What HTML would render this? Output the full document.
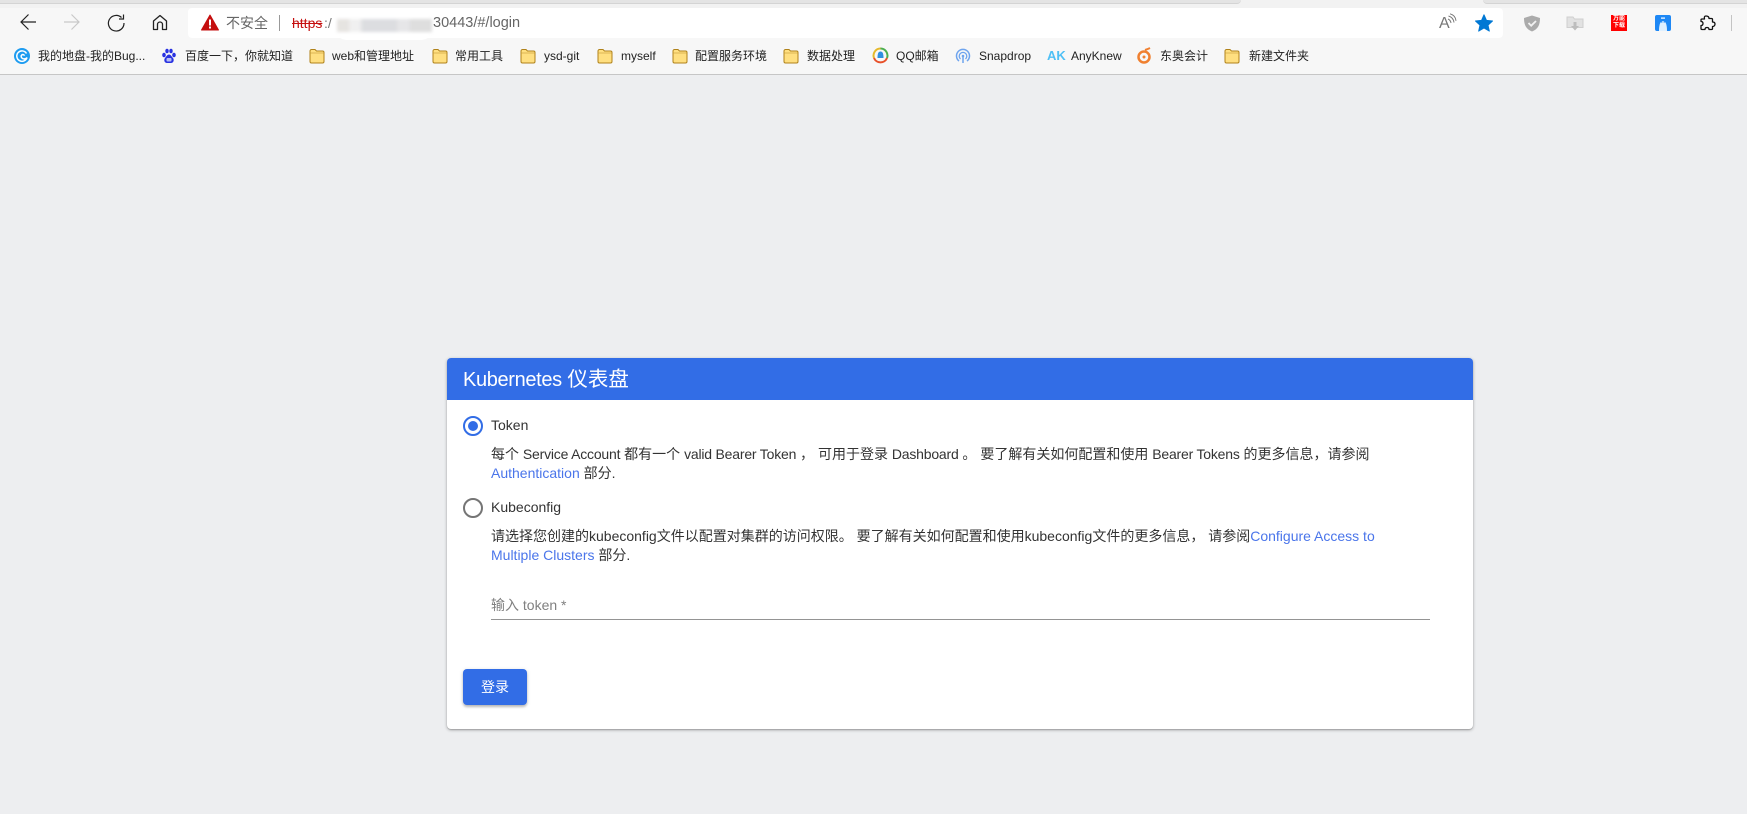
<!DOCTYPE html>
<html><head><meta charset="utf-8"><style>
html,body{margin:0;padding:0;width:1747px;height:814px;overflow:hidden;background:#edeef0;font-family:"Liberation Sans","Noto Sans CJK SC",sans-serif}
.a{position:absolute;white-space:nowrap}
.b{font-size:12px;line-height:16px;top:48px;color:#222}
.f{position:absolute;top:48px;width:16px;height:16px}
.p{font-size:14px;line-height:19px;color:#333}
.l{color:#4a75ea}
.t{letter-spacing:-.2px}
</style></head><body>
<div class="a" style="left:0;top:0;width:1747px;background:#f7f7f7;border-bottom:1px solid #c6c6c6;box-sizing:content-box;height:74px"></div>
<div class="a" style="left:0;top:0;width:1747px;height:8px;background:#f2f2f2"></div>
<div class="a" style="left:0;top:0;width:1241px;height:3px;background:#e4e4e4;border-bottom:1px solid #d4d4d4;border-bottom-right-radius:4px"></div>
<div class="a" style="left:1483px;top:0;width:264px;height:3px;background:#e4e4e4;border-bottom:1px solid #d4d4d4;border-bottom-left-radius:4px"></div>

<svg class="a" style="left:0;top:0" width="1747" height="75" viewBox="0 0 1747 75" fill="none">
<path d="M36 22H21M28.500 14.500L21 22l7.500 7.500" stroke="#222" stroke-width="1.200"/>
<path d="M64 22H79M71.500 14.500L79 22l-7.500 7.500" stroke="#c8c8c8" stroke-width="1.200"/>
<path d="M121.500 17.500A7.800 7.800 0 1 0 124 23" stroke="#222" stroke-width="1.200"/>
<path d="M123.500 14.500v4.500h-4.500" stroke="#222" stroke-width="1.200"/>
<path d="M153.500 29.500v-8.500l6.500-5.500 6.500 5.500v8.500h-4v-5a2.500 2.500 0 0 0-5 0v5z" stroke="#222" stroke-width="1.300" stroke-linejoin="round"/>
</svg>

<div class="a" style="left:188px;top:8px;width:1315px;height:30px;background:#fff;border-radius:4px"></div>
<svg class="a" style="left:201px;top:14px" width="18" height="17" viewBox="0 0 18 17"><path d="M9 1L17.500 16H.5z" fill="#c50f0f" stroke="#c50f0f" stroke-linejoin="round"/><rect x="8" y="5.500" width="2" height="6" fill="#fff"/><rect x="8" y="12.500" width="2" height="2" fill="#fff"/></svg>
<div class="a" style="left:226px;top:15px;font-size:14px;line-height:16px;color:#666">不安全</div>
<div class="a" style="left:279px;top:15px;width:1px;height:16px;background:#999"></div>
<div class="a" style="left:292px;top:15px;font-size:14px;line-height:16px;color:#c50f0f;text-decoration:line-through">https</div>
<div class="a" style="left:324px;top:15px;font-size:14px;line-height:16px;color:#777">:/</div>
<div class="a" style="left:335px;top:13px;width:98px;height:27px;background:#fff;border-radius:12px"></div>
<div class="a" style="left:337px;top:19px;width:95px;height:13px;filter:blur(1.500px);background:linear-gradient(90deg,#e6e4e1 0,#e6e4e1 12%,#f0f0f0 14%,#f0f0f0 24%,#dcdde0 27%,#dcdde0 62%,#e6e6e8 65%,#e6e6e8 75%,#dedede 78%,#dedede 100%)"></div>
<div class="a" style="left:433px;top:15px;font-size:14.500px;line-height:16px;color:#666">30443/#/login</div>

<div class="a" style="left:1439px;top:14px;font-size:16px;line-height:20px;color:#777">A</div>
<svg class="a" style="left:1447px;top:13px" width="10" height="12" viewBox="0 0 10 12" fill="none" stroke="#777"><path d="M1 6q2.500 1 3 4M1.500 3q5 1.500 5.500 6.500M3 .8q5.500 1.500 6 7"/></svg>
<svg class="a" style="left:1475px;top:14px" width="18" height="18" viewBox="0 0 18 18"><path d="M9 .8l2.500 5.600 6 .6-4.500 4.100 1.300 6L9 14l-5.300 3.100 1.300-6L.5 7l6-.6z" fill="#0078d4" stroke="#0078d4" stroke-linejoin="round"/></svg>
<svg class="a" style="left:1523px;top:15px" width="18" height="17" viewBox="0 0 18 17"><path d="M9 0.500L17 3c0 7-2 11-8 13.500C3 14 1 10 1 3z" fill="#ababab"/><path d="M5.500 8l2.700 2.700L13 6" fill="none" stroke="#f2f2f2" stroke-width="1.800"/></svg>
<svg class="a" style="left:1566px;top:15px" width="18" height="17" viewBox="0 0 18 17"><path d="M1 2h6l1.500 2H17v8.500H1z" fill="#e2e2e2" stroke="#cfcfcf"/><path d="M7.500 7h3v4h2.500L9 15.500 5 11h2.500z" fill="#bdbdbd"/></svg>
<div class="a" style="left:1611px;top:15px;width:16px;height:16px;background:#f00;color:#fff;font-size:6px;line-height:7px;text-align:center;padding-top:1px;box-sizing:border-box;font-weight:bold">万能<br>下载</div>
<svg class="a" style="left:1655px;top:15px" width="16" height="16" viewBox="0 0 16 16"><rect width="16" height="16" rx="2" fill="#1e88f5"/><path d="M4 16c0-7 1.500-10 4-10s4 3 4 10z" fill="#dff0ff"/><rect x="6" y="2.500" width="4" height="1.200" fill="#fff"/><circle cx="6.800" cy="7" r=".7" fill="#1e88f5"/><circle cx="9.200" cy="7" r=".7" fill="#1e88f5"/></svg>
<svg class="a" style="left:1698px;top:14px" width="18" height="18" viewBox="0 0 18 18" fill="none"><path d="M8 2c2 0 3 1 3 2.500h2.500a1 1 0 0 1 1 1V8c2 0 2.500 1 2.500 2s-.5 2.500-2.500 2.500v2a1 1 0 0 1-1 1H11c0-1.500-1-2-2-2s-2 .5-2 2H4a1 1 0 0 1-1-1v-3c1.500 0 2-1 2-2s-.5-2-2-2V6a1 1 0 0 1 1-1h2.500C6 3 6.500 2 8 2z" stroke="#111" stroke-width="1.300" stroke-linejoin="round"/></svg>
<div class="a" style="left:1731px;top:15px;width:1px;height:16px;background:#c4c4c4"></div>

<svg class="a" style="left:14px;top:48px" width="16" height="16" viewBox="0 0 16 16" fill="none"><circle cx="8" cy="8" r="8" fill="#1e9cf0"/><path d="M12.500 5.500A5.200 5.200 0 1 0 13 9.500c-1 1.500-3 1.800-4.500 1-1.500-.8-1.800-2.700-.6-3.600 1-.7 2.300-.2 2.600.8" stroke="#fff" stroke-width="1.500"/></svg>
<div class="a b" style="left:38px">我的地盘-我的Bug...</div>
<svg class="a" style="left:161px;top:48px" width="16" height="16" viewBox="0 0 16 16" fill="#2932e1"><ellipse cx="3" cy="7" rx="1.800" ry="2.300"/><ellipse cx="6" cy="3" rx="1.700" ry="2.300"/><ellipse cx="10" cy="3" rx="1.700" ry="2.300"/><ellipse cx="13" cy="7" rx="1.800" ry="2.300"/><path d="M8 6.500c-2 0-2.500 2-4 3.500-1.500 2-.5 5 2 5h4c2.500 0 3.500-3 2-5-1.500-1.500-2-3.500-4-3.500z"/><rect x="5.500" y="10" width="5" height="3.500" rx="1" fill="#b7bcf5"/></svg>
<div class="a b" style="left:185px">百度一下，你就知道</div>

<svg width="0" height="0" style="position:absolute"><defs><g id="fd"><path d="M1 3a1.500 1.500 0 0 1 1.500-1.500h3.500L7.500 3h6A1.500 1.500 0 0 1 15 4.500v9a1.500 1.500 0 0 1-1.500 1.500h-11A1.500 1.500 0 0 1 1 13.500z" fill="#ffdf80" stroke="#b0821a"/><path d="M1 5h14" stroke="#c79a35" stroke-width=".6"/></g></defs></svg>
<svg class="f" style="left:309px" viewBox="0 0 16 16"><use href="#fd"/></svg>
<div class="a b" style="left:332px">web和管理地址</div>
<svg class="f" style="left:432px" viewBox="0 0 16 16"><use href="#fd"/></svg>
<div class="a b" style="left:455px">常用工具</div>
<svg class="f" style="left:520px" viewBox="0 0 16 16"><use href="#fd"/></svg>
<div class="a b" style="left:544px">ysd-git</div>
<svg class="f" style="left:597px" viewBox="0 0 16 16"><use href="#fd"/></svg>
<div class="a b" style="left:621px">myself</div>
<svg class="f" style="left:672px" viewBox="0 0 16 16"><use href="#fd"/></svg>
<div class="a b" style="left:695px">配置服务环境</div>
<svg class="f" style="left:783px" viewBox="0 0 16 16"><use href="#fd"/></svg>
<div class="a b" style="left:807px">数据处理</div>
<svg class="a" style="left:872px;top:47px" width="17" height="17" viewBox="0 0 17 17" fill="none"><path d="M8.500 1.500A7 7 0 0 0 2 11" stroke="#e5b92c" stroke-width="2"/><path d="M8.500 1.500A7 7 0 0 1 15 11" stroke="#4caf50" stroke-width="2"/><path d="M2 11a7 7 0 0 0 13 0" stroke="#e8512a" stroke-width="2"/><path d="M5.500 11c0-5 1-6.500 3-6.500s3 1.500 3 6.500z" fill="#2f8fe0"/></svg>
<div class="a b" style="left:896px">QQ邮箱</div>
<svg class="a" style="left:955px;top:48px" width="16" height="16" viewBox="0 0 16 16" fill="none" stroke="#6ea4ee"><path d="M4 13A6.500 6.500 0 1 1 12 13" stroke-width="1.500"/><path d="M5.500 11A3.800 3.800 0 1 1 10.500 11" stroke-width="1.300"/><circle cx="8" cy="8" r="1.300" fill="#6ea4ee" stroke="none"/><path d="M8 9v6" stroke-width="1.500"/></svg>
<div class="a b" style="left:979px">Snapdrop</div>
<div class="a" style="left:1047px;top:48px;font-size:13px;line-height:16px;font-weight:bold;color:#4fc0f5">AK</div>
<div class="a b" style="left:1071px">AnyKnew</div>
<svg class="a" style="left:1136px;top:47px" width="17" height="17" viewBox="0 0 17 17" fill="none"><circle cx="8" cy="10" r="5.500" stroke="#f08030" stroke-width="2.500"/><circle cx="8" cy="10" r="1.500" fill="#f08030"/><path d="M9 3q3-1 5-2" stroke="#f08030" stroke-width="2"/></svg>
<div class="a b" style="left:1160px">东奥会计</div>
<svg class="f" style="left:1224px" viewBox="0 0 16 16"><use href="#fd"/></svg>
<div class="a b" style="left:1249px">新建文件夹</div>

<div class="a" style="left:447px;top:358px;width:1026px;height:371px;background:#fff;border-radius:4px;box-shadow:0 1px 3px rgba(0,0,0,.3),0 1px 1px rgba(0,0,0,.14)"></div>
<div class="a" style="left:447px;top:358px;width:1026px;height:42px;background:#326de6;border-radius:4px 4px 0 0"></div>
<div class="a" style="left:463px;top:366px;font-size:20px;line-height:28px;color:#fff"><span style="letter-spacing:-.35px">Kubernetes</span> <span style="font-size:20.500px">仪表盘</span></div>

<div class="a" style="left:463px;top:416px;width:20px;height:20px;box-sizing:border-box;border:2px solid #326de6;border-radius:50%"></div>
<div class="a" style="left:468px;top:421px;width:10px;height:10px;background:#326de6;border-radius:50%"></div>
<div class="a p" style="left:491px;top:416px">Token</div>
<div class="a p" style="left:491px;top:445px">每个 <span class="t">Service Account</span> 都有一个 <span class="t">valid Bearer Token</span> ， 可用于登录 <span class="t">Dashboard</span> 。 要了解有关如何配置和使用 <span class="t">Bearer Tokens</span> 的更多信息，请参阅</div>
<div class="a p" style="left:491px;top:464px"><span class="l">Authentication</span> 部分.</div>

<div class="a" style="left:463px;top:498px;width:20px;height:20px;box-sizing:border-box;border:2px solid #757575;border-radius:50%"></div>
<div class="a p" style="left:491px;top:498px">Kubeconfig</div>
<div class="a p" style="left:491px;top:527px">请选择您创建的kubeconfig文件以配置对集群的访问权限。 要了解有关如何配置和使用kubeconfig文件的更多信息， 请参阅<span class="l">Configure Access to</span></div>
<div class="a p" style="left:491px;top:546px"><span class="l">Multiple Clusters</span> 部分.</div>

<div class="a" style="left:491px;top:596px;font-size:14px;line-height:19px;color:#808080">输入 token *</div>
<div class="a" style="left:491px;top:619px;width:939px;height:1px;background:#949494"></div>

<div class="a" style="left:463px;top:669px;width:64px;height:36px;background:#326de6;border-radius:4px;box-shadow:0 2px 2px rgba(0,0,0,.2),0 1px 4px rgba(0,0,0,.15);color:#fff;font-size:14px;line-height:36px;text-align:center">登录</div>
</body></html>
